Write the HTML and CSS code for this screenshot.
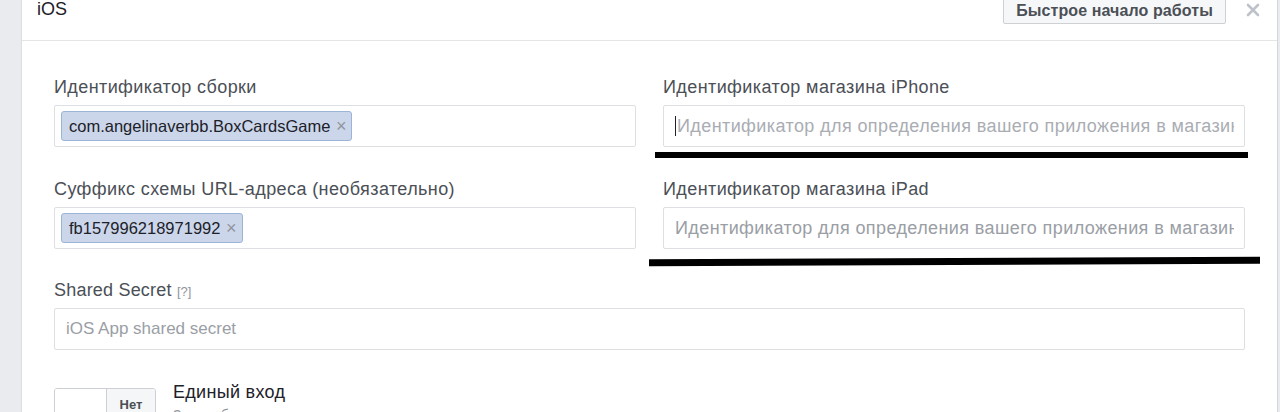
FILE: index.html
```html
<!DOCTYPE html>
<html lang="ru">
<head>
  <meta charset="UTF-8">
  <meta name="viewport" content="width=device-width, initial-scale=1.0">
  <title>iOS</title>
  <link rel="stylesheet" href="styles.css">
</head>
<body>
  <div class="panel">
    <div class="panel-header">
      <div class="panel-title">iOS</div>
      <div class="header-actions">
        <button class="quick-start">Быстрое начало работы</button>
        <span class="close">
          <svg width="14" height="14" viewBox="0 0 14 14"><path d="M2 2L12 12M12 2L2 12" stroke="#bec2c9" stroke-width="2.6" stroke-linecap="round"/></svg>
        </span>
      </div>
    </div>

    <div class="panel-body">
      <div class="grid">
        <div class="field">
          <label class="label">Идентификатор сборки</label>
          <div class="input tokens">
            <span class="token">com.angelinaverbb.BoxCardsGame <span class="token-x">×</span></span>
          </div>
        </div>
        <div class="field">
          <label class="label">Идентификатор магазина iPhone</label>
          <div class="input placeholder light"><span class="caret"></span><span class="ph-text">Идентификатор для определения вашего приложения в магазине</span></div>
          <div class="mark mark-one"></div>
        </div>
        <div class="field">
          <label class="label">Суффикс схемы URL-адреса (необязательно)</label>
          <div class="input tokens">
            <span class="token">fb157996218971992 <span class="token-x">×</span></span>
          </div>
        </div>
        <div class="field">
          <label class="label">Идентификатор магазина iPad</label>
          <div class="input placeholder"><span class="ph-text">Идентификатор для определения вашего приложения в магазине</span></div>
          <div class="mark mark-two"></div>
        </div>
        <div class="field wide">
          <label class="label latin">Shared Secret <span class="help">[?]</span></label>
          <div class="input placeholder latin">iOS App shared secret</div>
        </div>
      </div>

      <div class="switch-row">
        <div class="switch">
          <span class="switch-on"></span>
          <span class="switch-off">Нет</span>
        </div>
        <div class="switch-text">
          <div class="switch-title">Единый вход</div>
          <div class="switch-desc">Запуск будет выполняться на</div>
        </div>
      </div>
    </div>
  </div>
</body>
</html>
```

FILE: styles.css
```css
body {
  margin: 0;
  padding: 0 2px 0 21px;
  background-color: #e9ebee;
  font-family: "Liberation Sans", Arial, sans-serif;
  color: #1d2129;
  overflow: hidden;
}
.panel {
  background: white;
  border-left: 1px solid #dddfe2;
  border-right: 1px solid #d3d6db;
  height: 412px;
  overflow: hidden;
}
.panel-header {
  height: 40px;
  border-bottom: 1px solid #e5e5e5;
  display: flex;
  justify-content: space-between;
  align-items: flex-start;
  padding: 0 17px 0 15px;
}
.panel-title {
  font-size: 18px;
  line-height: 20px;
  color: #1d2129;
  margin-top: -1px;
}
.header-actions {
  display: flex;
  align-items: flex-start;
  gap: 20px;
}
.quick-start {
  margin-top: -3px;
  height: 27px;
  padding: 0 12px;
  font-family: "Liberation Sans", Arial, sans-serif;
  font-weight: bold;
  font-size: 16px;
  letter-spacing: 0.1px;
  color: #4b4f56;
  background: #f6f7f9;
  border: 1px solid #ced0d4;
  border-radius: 2px;
}
.close {
  margin-top: 3px;
  display: flex;
}
.panel-body {
  padding: 36px 32px 0 32px;
}
.grid {
  display: grid;
  grid-template-columns: minmax(0, 1fr) minmax(0, 1fr);
  column-gap: 27px;
  row-gap: 32px;
}
.field {
  position: relative;
  min-width: 0;
}
.wide {
  grid-column: 1 / 3;
  margin-top: -1px;
}
.label {
  display: block;
  font-size: 18px;
  letter-spacing: 0.4px;
  line-height: 20px;
  height: 20px;
  color: #4b4f56;
  margin-bottom: 8px;
}
.label.latin {
  letter-spacing: 0.2px;
}
.help {
  font-size: 13px;
  line-height: 1;
  letter-spacing: 0;
  color: #90949c;
}
.input {
  box-sizing: border-box;
  height: 42px;
  border: 1px solid #dddfe2;
  border-radius: 2px;
  display: flex;
  align-items: center;
  padding: 0 10px 0 11px;
  font-size: 18px;
  letter-spacing: 0.4px;
  white-space: nowrap;
  overflow: hidden;
}
.ph-text {
  flex: 1;
  min-width: 0;
  overflow: hidden;
}
.input.latin {
  font-size: 17px;
  letter-spacing: 0;
}
.tokens {
  padding: 0 6px;
}
.token {
  display: inline-block;
  height: 28px;
  line-height: 28px;
  padding: 0 5px 0 7px;
  font-size: 16.5px;
  letter-spacing: 0;
  color: #1d2129;
  background: #cbd6ea;
  border: 1px solid #9cb4d8;
  border-radius: 3px;
}
.token-x {
  color: #90949c;
  font-size: 18px;
  margin-left: 1px;
}
.placeholder {
  color: #9a9ea5;
}
.placeholder.light {
  color: #a9adb3;
}
.caret {
  display: inline-block;
  flex-shrink: 0;
  width: 1px;
  height: 20px;
  background: #1d2129;
  margin-right: 1px;
}
.mark {
  position: absolute;
  height: 6px;
  background: #000;
}
.mark-one {
  left: -8px;
  right: -3px;
  bottom: -11px;
}
.mark-two {
  left: -14px;
  right: -15px;
  bottom: -16px;
  height: 7px;
  transform: rotate(-0.25deg);
}
.switch-row {
  display: flex;
  gap: 17px;
  margin-top: 38px;
}
.switch {
  display: flex;
  width: 102px;
  height: 40px;
  border: 1px solid #ccd0d5;
  border-radius: 3px;
  box-sizing: border-box;
  overflow: hidden;
}
.switch-on {
  width: 51px;
  background: white;
}
.switch-off {
  flex: 1;
  background: #f5f6f7;
  border-left: 1px solid #ccd0d5;
  font-size: 13px;
  font-weight: bold;
  color: #4b4f56;
  text-align: center;
  line-height: 32px;
}
.switch-title {
  font-size: 18px;
  letter-spacing: 0.3px;
  line-height: 22px;
  margin-top: -7px;
}
.switch-desc {
  font-size: 14px;
  color: #90949c;
  margin-top: 4px;
}
```
